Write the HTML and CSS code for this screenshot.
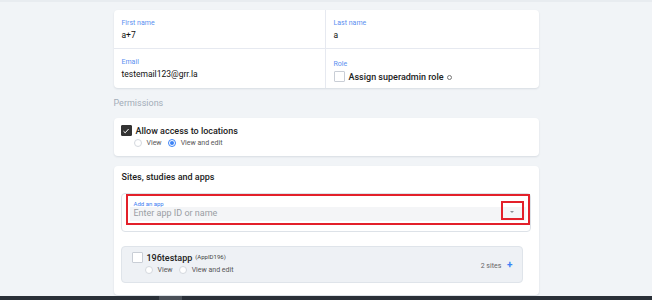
FILE: index.html
```html
<!DOCTYPE html>
<html lang="en">
<head>
    <meta charset="UTF-8">
    <meta name="viewport" content="width=device-width, initial-scale=1.0">
    <title>Edit user</title>
    <link rel="stylesheet" href="styles.css">
</head>
<body>
    <div class="topline"></div>
    <div class="page">
        <div class="card details">
            <div class="cell">
                <span class="label">First name</span>
                <span class="value">a+7</span>
            </div>
            <div class="cell">
                <span class="label">Last name</span>
                <span class="value">a</span>
            </div>
            <div class="cell">
                <span class="label">Email</span>
                <span class="value">testemail123@grr.la</span>
            </div>
            <div class="cell role">
                <span class="label">Role</span>
                <label class="check-row">
                    <span class="box"></span>
                    <span class="strong">Assign superadmin role</span>
                    <span class="info"></span>
                </label>
            </div>
        </div>

        <div class="section-title">Permissions</div>

        <div class="card perms">
            <label class="check-row">
                <span class="box checked">
                    <svg width="8" height="8" viewBox="0 0 8 8"><path d="M1.5 4.2 L3.2 5.8 L6.6 2" fill="none" stroke="#fff" stroke-width="1"/></svg>
                </span>
                <span class="strong">Allow access to locations</span>
            </label>
            <div class="radios">
                <span class="radio"></span><span class="radio-text">View</span>
                <span class="radio on"></span><span class="radio-text">View and edit</span>
            </div>
        </div>

        <div class="card apps">
            <h3>Sites, studies and apps</h3>
            <div class="field">
                <div class="highlight">
                    <span class="field-label">Add an app</span>
                    <div class="field-input">Enter app ID or name</div>
                    <span class="caret-box"><span class="caret"></span></span>
                </div>
            </div>

            <div class="app-row">
                <div class="app-main">
                    <label class="check-row">
                        <span class="box"></span>
                        <span class="app-name">196testapp</span>
                        <span class="app-id">(AppID196)</span>
                    </label>
                    <div class="radios">
                        <span class="radio"></span><span class="radio-text">View</span>
                        <span class="radio"></span><span class="radio-text">View and edit</span>
                    </div>
                </div>
                <div class="sites">2 sites <span class="plus">+</span></div>
            </div>
        </div>
    </div>
    <div class="taskbar"><span class="task"></span></div>
</body>
</html>
```

FILE: styles.css
```css
body {
    margin: 0;
    background-color: #f1f4f7;
    font-family: Roboto, 'Liberation Sans', Arial, sans-serif;
    color: #222;
    height: 300px;
    overflow: hidden;
}
.topline {
    height: 2px;
    background-color: #e8ecf0;
}
.page {
    width: 425px;
    margin: 8px auto 0;
}
.card {
    background-color: white;
    border-radius: 4px;
    box-shadow: 0 1px 2px rgba(30, 50, 80, 0.12);
}
.details {
    display: grid;
    grid-template-columns: 212px 1fr;
    grid-template-rows: 39px 39px;
}
.cell {
    padding: 9px 8px 0;
    display: flex;
    flex-direction: column;
    box-sizing: border-box;
}
.cell:nth-child(1), .cell:nth-child(3) {
    border-right: 1px solid #e6e9f0;
}
.cell:nth-child(1), .cell:nth-child(2) {
    border-bottom: 1px solid #e6e9f0;
}
.label {
    font-size: 7px;
    color: #5b8ff0;
    line-height: 9px;
}
.value {
    font-size: 8.5px;
    line-height: 13px;
    margin-top: 1px;
    color: #111;
}
.role .label {
    margin-top: 2px;
}
.check-row {
    display: flex;
    align-items: center;
}
.role .check-row {
    margin-top: 2px;
}
.box {
    width: 9px;
    height: 9px;
    border: 1px solid #c9ced6;
    border-radius: 1px;
    background-color: white;
    margin-right: 4px;
    display: flex;
    align-items: center;
    justify-content: center;
    flex-shrink: 0;
}
.box.checked {
    background-color: #333;
    border-color: #333;
}
.strong {
    font-size: 9px;
    font-weight: 500;
    color: #222;
}
.info {
    width: 3px;
    height: 3px;
    border: 1px solid #777;
    border-radius: 50%;
    margin-left: 3px;
    margin-top: 2px;
}
.section-title {
    height: 30px;
    line-height: 30px;
    font-size: 9px;
    color: #a3adb8;
}
.perms {
    height: 38px;
    padding: 7px 7px 0;
    box-sizing: border-box;
}
.radios {
    display: flex;
    align-items: center;
    margin-top: 3px;
    padding-left: 13px;
}
.radio {
    width: 6px;
    height: 6px;
    border: 1px solid #d4d8de;
    border-radius: 50%;
    margin-right: 5px;
    position: relative;
    background-color: white;
}
.radio.on {
    border-color: #3b82f6;
}
.radio.on::after {
    content: "";
    position: absolute;
    left: 1px;
    top: 1px;
    width: 4px;
    height: 4px;
    border-radius: 50%;
    background-color: #3b82f6;
}
.radio-text {
    font-size: 7px;
    color: #555;
    margin-right: 6px;
}
.apps {
    margin-top: 10px;
    height: 129px;
    padding: 6px 8px 0 7px;
    box-sizing: border-box;
}
.apps h3 {
    margin: 0;
    font-size: 9px;
    font-weight: 500;
    color: #222;
    line-height: 11px;
    padding-left: 1px;
}
.field {
    margin-top: 10px;
    border: 1px solid #dde2e8;
    border-radius: 4px;
    height: 39px;
    box-sizing: border-box;
    padding: 0 0 6px 4px;
}
.highlight {
    border: 2px solid #e3202a;
    height: 31px;
    box-sizing: border-box;
    position: relative;
    padding: 4px 2px 0;
}
.field-label {
    display: block;
    font-size: 6px;
    color: #3b7ef2;
    padding-left: 4px;
    line-height: 7px;
}
.field-input {
    background-color: #f4f5f7;
    height: 14px;
    line-height: 12px;
    font-size: 9px;
    color: #9a9ea4;
    padding-left: 4px;
}
.caret-box {
    position: absolute;
    right: 4px;
    top: 5px;
    width: 23px;
    height: 19px;
    border: 2px solid #e3202a;
    box-sizing: border-box;
    display: flex;
    align-items: center;
    justify-content: center;
}
.caret {
    width: 0;
    height: 0;
    border-left: 2.5px solid transparent;
    border-right: 2.5px solid transparent;
    border-top: 2.5px solid #8a8f96;
    margin-top: 2px;
}
.app-row {
    margin-top: 14px;
    width: 402px;
    height: 37px;
    background-color: #eef1f5;
    border: 1px solid #dfe4ea;
    border-radius: 4px;
    box-sizing: border-box;
    display: flex;
    justify-content: space-between;
    align-items: center;
    padding: 0 9px 0 10px;
}
.app-main {
    margin-top: -3px;
}
.app-name {
    font-size: 9px;
    font-weight: 500;
    color: #222;
}
.app-id {
    font-size: 6px;
    color: #444;
    margin-left: 3px;
    margin-top: -2px;
}
.sites {
    font-size: 7px;
    color: #666;
}
.plus {
    color: #3b82f6;
    font-size: 10px;
    font-weight: bold;
    margin-left: 4px;
}
.taskbar {
    position: fixed;
    left: 0;
    right: 0;
    bottom: 0;
    height: 4px;
    background-color: #2a3038;
}
.task {
    display: block;
    margin-left: 159px;
    width: 23px;
    height: 4px;
    background-color: #4a5058;
}
```
